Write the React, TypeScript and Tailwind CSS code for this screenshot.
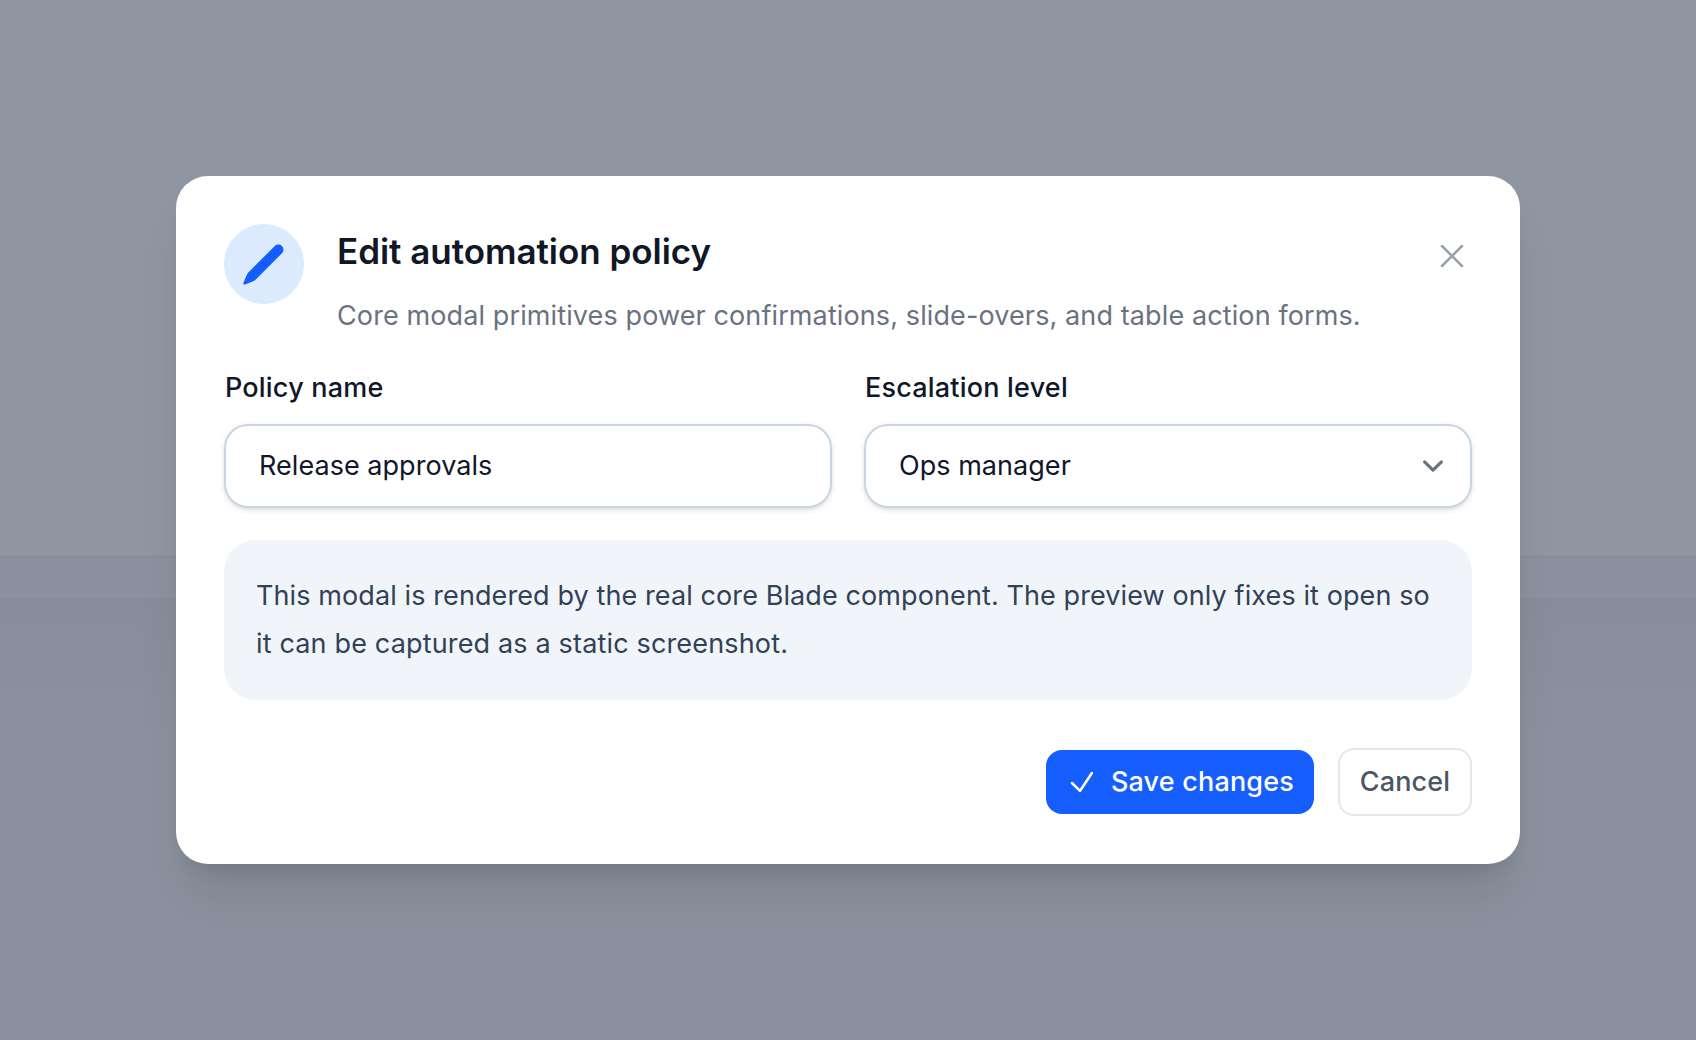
import type { ReactNode } from 'react';

function PencilIcon() {
  return (
    <svg viewBox="0 0 20 20" className="size-12 text-[#155dfc]" fill="currentColor" aria-hidden="true">
      <path d="m2.695 14.762-1.262 3.155a.5.5 0 0 0 .65.65l3.155-1.262a4 4 0 0 0 1.343-.886L17.5 5.501a2.121 2.121 0 0 0-3-3L3.58 13.419a4 4 0 0 0-.885 1.343Z" />
    </svg>
  );
}

function CloseIcon() {
  return (
    <svg viewBox="0 0 24 24" className="size-10" fill="none" stroke="currentColor" strokeWidth={1.5} strokeLinecap="round" strokeLinejoin="round" aria-hidden="true">
      <path d="M6 18 18 6M6 6l12 12" />
    </svg>
  );
}

function CheckIcon() {
  return (
    <svg viewBox="0 0 24 24" className="size-8" fill="none" stroke="currentColor" strokeWidth={1.9} strokeLinecap="round" strokeLinejoin="round" aria-hidden="true">
      <path d="m4.5 12.75 6 6 9-13.5" />
    </svg>
  );
}

function ChevronIcon() {
  return (
    <svg viewBox="0 0 20 20" className="size-[42px] text-[#6b7280]" fill="none" stroke="currentColor" strokeWidth={1.5} strokeLinecap="round" strokeLinejoin="round" aria-hidden="true">
      <path d="m6 8 4 4 4-4" />
    </svg>
  );
}

function Field({ label, value, icon }: { label: string; value: string; icon?: ReactNode }) {
  return (
    <div className="flex flex-1 flex-col gap-4">
      <div className="pl-px text-[27px] leading-10 font-medium tracking-[0.2px] text-slate-900">{label}</div>
      <div className="flex h-21 items-center justify-between rounded-3xl border-2 border-slate-300 bg-white pr-4 pl-[33px] shadow-[0_2px_6px_rgb(0_0_0/0.1),0_2px_4px_-2px_rgb(0_0_0/0.1)]">
        <span className="text-[27px] tracking-[0.04px] text-slate-900">{value}</span>
        {icon}
      </div>
    </div>
  );
}

export default function App() {
  return (
    <div className="relative h-[1040px] w-full overflow-hidden bg-[#8b919e] font-['Inter',sans-serif]">
      <div className="flex h-full flex-col">
        <div className="h-[558px] border-b-2 border-[#888e9b] bg-[#8f95a1]" />
        <div className="h-10 bg-[#8b919e]" />
        <div className="h-36 bg-linear-to-b from-[#878d9a] to-[#8b919e]" />
      </div>

      <div className="absolute inset-0 flex items-center justify-center">
        <div role="dialog" className="w-[1344px] rounded-[32px] bg-white p-12 shadow-[0_40px_50px_-10px_rgb(0_0_0/0.1),0_16px_20px_-12px_rgb(0_0_0/0.1)]">
          <div className="flex items-start gap-8">
            <div className="flex size-20 items-center justify-center rounded-full bg-[#dbeafe]">
              <PencilIcon />
            </div>
            <div className="flex flex-1 flex-col gap-[18px] pl-px">
              <h2 className="text-[35px] leading-[54px] font-semibold tracking-[-0.03px] text-gray-900">Edit automation policy</h2>
              <p className="text-[27px] leading-10 tracking-[0.11px] whitespace-nowrap text-gray-500">
                Core modal primitives power confirmations, slide-overs, and table action forms.
              </p>
            </div>
            <button type="button" aria-label="Close" className="mt-3 text-gray-400">
              <CloseIcon />
            </button>
          </div>

          <div className="mt-8 flex gap-8">
            <Field label="Policy name" value="Release approvals" />
            <Field label="Escalation level" value="Ops manager" icon={<ChevronIcon />} />
          </div>

          <div className="mt-8 rounded-[32px] bg-[#f1f5f9] p-8 text-[27px] leading-12 tracking-[0.1px] whitespace-nowrap text-slate-700">
            <p>This modal is rendered by the real core Blade component. The preview only fixes it open so</p>
            <p className="tracking-[0.16px]">it can be captured as a static screenshot.</p>
          </div>

          <div className="mt-12 flex items-center justify-end gap-6">
            <button type="button" className="flex h-16 w-[268px] items-center gap-[13px] rounded-2xl bg-[#155dfc] px-5 text-[27px] font-medium tracking-[0.18px] whitespace-nowrap text-white">
              <CheckIcon />
              Save changes
            </button>
            <button type="button" className="flex h-17 w-[134px] items-center justify-center rounded-2xl border-2 border-gray-200 bg-white text-[27px] font-medium tracking-[0.16px] text-gray-600">
              Cancel
            </button>
          </div>
        </div>
      </div>
    </div>
  );
}
